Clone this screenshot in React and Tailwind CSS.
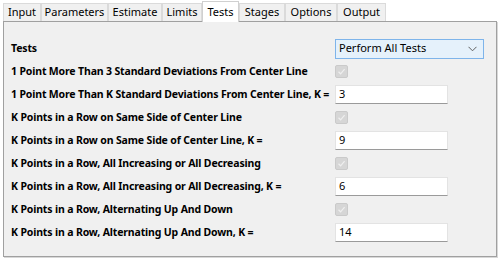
import React from 'react';

const tabs = ['Input', 'Parameters', 'Estimate', 'Limits', 'Tests', 'Stages', 'Options', 'Output'];
const tabWidths = [38, 67, 54, 40, 37, 46, 52, 49];

const rows = [
  { label: '1 Point More Than 3 Standard Deviations From Center Line', type: 'check' },
  { label: '1 Point More Than K Standard Deviations From Center Line, K =', type: 'input', value: '3' },
  { label: 'K Points in a Row on Same Side of Center Line', type: 'check' },
  { label: 'K Points in a Row on Same Side of Center Line, K =', type: 'input', value: '9' },
  { label: 'K Points in a Row, All Increasing or All Decreasing', type: 'check' },
  { label: 'K Points in a Row, All Increasing or All Decreasing, K =', type: 'input', value: '6' },
  { label: 'K Points in a Row, Alternating Up And Down', type: 'check' },
  { label: 'K Points in a Row, Alternating Up And Down, K =', type: 'input', value: '14' },
];

const DisabledCheck = () => (
  <div className="w-[13px] h-[13px] rounded-[2px] bg-[#d6d6d6] border border-[#cacaca] flex items-center justify-center">
    <svg width="9" height="9" viewBox="0 0 9 9">
      <path d="M1.5 4.8 L3.6 6.8 L7.6 2.2" fill="none" stroke="#efefef" strokeWidth="1.2" />
    </svg>
  </div>
);

const App = () => {
  return (
    <div className="w-[500px] h-[259px] bg-white font-['Noto_Sans','Open_Sans',sans-serif] text-[11px] text-black overflow-hidden">
      <div className="flex items-end h-[21px] pl-[3px]">
        {tabs.map((t, i) => (
          <div
            key={t}
            style={{ width: tabWidths[i] }}
            className={
              t === 'Tests'
                ? 'h-[21px] bg-white border border-b-0 border-[#d0d0d0] flex items-center justify-center -mb-px relative z-10'
                : 'h-[18px] bg-[#f0f0f0] border border-b-0 border-[#dadada] flex items-center justify-center'
            }
          >
            {t}
          </div>
        ))}
      </div>
      <div className="mx-[3px] h-[236px] bg-[#f0f0f0] border border-[#a0a0a0] shadow-[1px_1px_0_#d8d8d8] pl-[7px] pt-[15px]">
        <div className="grid grid-cols-[324px_1fr] auto-rows-[23px] items-center">
          <div className="font-bold text-[10.5px] tracking-[-0.15px]">Tests</div>
          <div className="w-[149px] h-[20px] border border-[#7eb4ea] bg-[#e5f1fb] flex items-center justify-between pl-[3px] pr-[6px]">
            <span>Perform All Tests</span>
            <svg width="9" height="6" viewBox="0 0 9 6">
              <path d="M0.5 0.8 L4.5 4.8 L8.5 0.8" fill="none" stroke="#606060" strokeWidth="1" />
            </svg>
          </div>
          {rows.map((r) => (
            <React.Fragment key={r.label}>
              <div className="whitespace-nowrap font-bold text-[10.5px] tracking-[-0.15px]">{r.label}</div>
              {r.type === 'check' ? (
                <DisabledCheck />
              ) : (
                <div className="w-[113px] h-[19px] bg-white border border-[#e3e3e3] border-b-[#9a9a9a] flex items-center pl-[3px]">
                  {r.value}
                </div>
              )}
            </React.Fragment>
          ))}
        </div>
      </div>
    </div>
  );
};

export default App;
